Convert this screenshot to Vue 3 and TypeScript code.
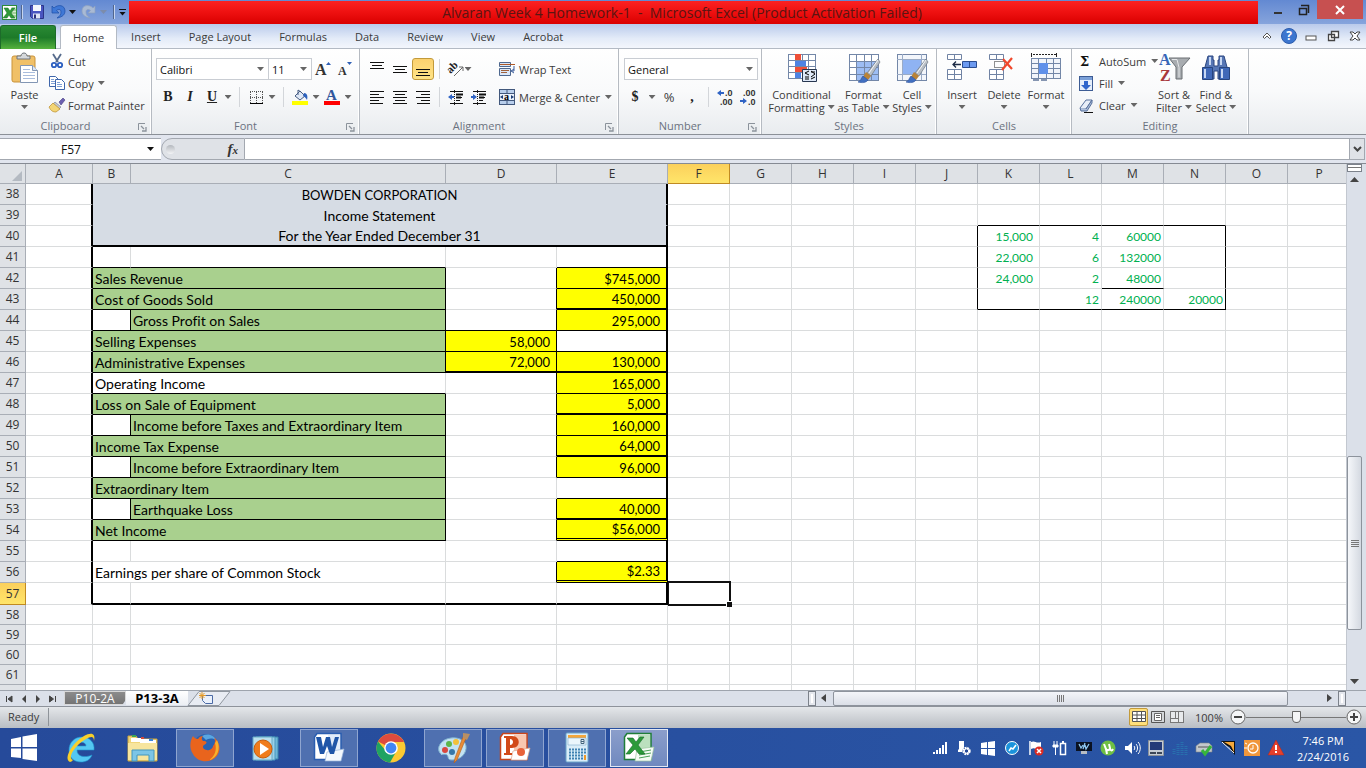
<script setup lang="ts">
import { ref } from 'vue'

interface Cell {
  key: string
  text: string
  cls: string
  span: number
}
interface Spec {
  v?: string
  c?: string
  span?: number
}

const columns = 'ABCDEFGHIJKLMNOP'.split('')
const tabs = ['Home', 'Insert', 'Page Layout', 'Formulas', 'Data', 'Review', 'View', 'Acrobat']

const specs: Record<string, Spec> = {
  B38: { v: 'BOWDEN CORPORATION', c: 'head caps', span: 4 },
  B39: { v: 'Income Statement', c: 'head', span: 4 },
  B40: { v: 'For the Year Ended December 31', c: 'head b2', span: 4 },
  B41: { c: 'bb' }, C41: { c: 'bb' }, E41: { c: 'bb' },
  B42: { v: 'Sales Revenue', c: 'green', span: 2 }, D42: { c: 'br' }, E42: { v: '$745,000', c: 'yellow bb' },
  B43: { v: 'Cost of Goods Sold', c: 'green', span: 2 }, D43: { c: 'br' }, E43: { v: '450,000', c: 'yellow b2' },
  B44: { c: 'bb br' }, C44: { v: 'Gross Profit on Sales', c: 'green' }, D44: { c: 'bb br' }, E44: { v: '295,000', c: 'yellow bb' },
  B45: { v: 'Selling Expenses', c: 'green', span: 2 }, D45: { v: '58,000', c: 'yellow bb br' }, E45: { c: 'bb' },
  B46: { v: 'Administrative Expenses', c: 'green', span: 2 }, D46: { v: '72,000', c: 'yellow b2 br' }, E46: { v: '130,000', c: 'yellow b2' },
  B47: { v: 'Operating Income', c: 'bb', span: 2 }, D47: { c: 'br' }, E47: { v: '165,000', c: 'yellow bb' },
  B48: { v: 'Loss on Sale of Equipment', c: 'green', span: 2 }, D48: { c: 'br' }, E48: { v: '5,000', c: 'yellow b2' },
  B49: { c: 'bb br' }, C49: { v: 'Income before Taxes and Extraordinary Item', c: 'green' }, D49: { c: 'br' }, E49: { v: '160,000', c: 'yellow bb' },
  B50: { v: 'Income Tax Expense', c: 'green', span: 2 }, D50: { c: 'br' }, E50: { v: '64,000', c: 'yellow b2' },
  B51: { c: 'bb br' }, C51: { v: 'Income before Extraordinary Item', c: 'green' }, D51: { c: 'br' }, E51: { v: '96,000', c: 'yellow bb' },
  B52: { v: 'Extraordinary Item', c: 'green', span: 2 }, E52: { c: 'bb' },
  B53: { c: 'bb br' }, C53: { v: 'Earthquake Loss', c: 'green' }, D53: { c: 'br' }, E53: { v: '40,000', c: 'yellow b2' },
  B54: { v: 'Net Income', c: 'green', span: 2 }, D54: { c: 'br' }, E54: { v: '$56,000', c: 'yellow bd' },
  E55: { c: 'bb' },
  B56: { v: 'Earnings per share of Common Stock', span: 2 }, D56: { c: 'br' }, E56: { v: '$2.33', c: 'yellow bd' },
  B57: { c: 'b2' }, C57: { c: 'b2' }, D57: { c: 'b2' }, E57: { c: 'b2' },
  F57: { c: 'active' },
  K39: { c: 'bb' }, L39: { c: 'bb' }, M39: { c: 'bb' }, N39: { c: 'bb' },
  J40: { c: 'br' }, J41: { c: 'br' }, J42: { c: 'br' }, J43: { c: 'br' },
  K40: { v: '15,000', c: 'calc comma' }, L40: { v: '4', c: 'calc' }, M40: { v: '60000', c: 'calc' }, N40: { c: 'br' },
  K41: { v: '22,000', c: 'calc comma' }, L41: { v: '6', c: 'calc' }, M41: { v: '132000', c: 'calc' }, N41: { c: 'br' },
  K42: { v: '24,000', c: 'calc comma' }, L42: { v: '2', c: 'calc' }, M42: { v: '48000', c: 'calc bb' }, N42: { c: 'br' },
  K43: { c: 'bb' }, L43: { v: '12', c: 'calc bb' }, M43: { v: '240000', c: 'calc bb' }, N43: { v: '20000', c: 'calc bb br' },
}

function buildRow(n: number): Cell[] {
  const out: Cell[] = []
  let skip = 0
  for (const col of columns) {
    if (skip > 0) { skip--; continue }
    const s = specs[col + n] ?? {}
    const span = s.span ?? 1
    skip = span - 1
    const cls = [s.c ?? '']
    if (n <= 57 && (col === 'A' || col === 'E' || span === 4)) cls.push('r2')
    out.push({ key: col + n, text: s.v ?? '', cls: cls.join(' '), span })
  }
  return out
}
const rows = Array.from({ length: 25 }, (_, i) => {
  const n = 38 + i
  return { n, label: n < 62 ? String(n) : '', cls: n === 57 ? 'h22' : n > 57 ? 'h20' : 'h21', cells: buildRow(n) }
})

const nameBox = ref('F57')
const formula = ref('')
const zoom = ref(50)

const grid = (x: number, y: number, w: number, h: number, nx: number, ny: number, c = '#7387a8') => {
  let d = ''
  for (let i = 0; i <= nx; i++) d += `M${x + Math.round((w * i) / nx) + 0.5} ${y}v${h}`
  for (let i = 0; i <= ny; i++) d += `M${x} ${y + Math.round((h * i) / ny) + 0.5}h${w + 1}`
  return `<path d="${d}" stroke="${c}" fill="none"/>`
}
const lines = (rowsX: [number, number, number][]) =>
  `<path d="${rowsX.map(([x, y, w]) => `M${x} ${y}.5h${w}`).join('')}" stroke="#111"/>`
const brush = `<path d="M30 6l2 3-9 14-4-3z" fill="#b9bfc6" stroke="#6d7782" stroke-width=".7"/><path d="M30 7l-9 13" stroke="#f4f6f8"/><path d="M18 19l5 4-3 4-5-3z" fill="#b98338"/><path d="M15 23l5 4c-2 3-6 3-10 2 3-1 3-4 5-6z" fill="#416fc0" stroke="#2a519c" stroke-width=".6"/>`
const page = (x: number, y: number) => `<path d="M${x}.5 ${y}.500h6l3 3v7h-9z" fill="#fff" stroke="#3f66ab"/><path d="M${x + 2} ${y + 3}.500h3m-3 2h5m-5 2h5" stroke="#7fa0d5"/>`

const icons: Record<string, string> = {
  excel: `<rect x="1.5" y="1.5" width="14" height="14" fill="#fff" stroke="#2d8a3c"/><path d="M10 3h5v12h-5z" fill="#d6efd2"/><path d="M10 6h5m-5 3h5m-5 3h5" stroke="#74b56b"/><path d="M3 4h4l2 3 2-3h3l-4 5 4 5h-4l-2-3-2 3H2l4-5z" fill="#2f9a39" stroke="#1b6c2a" stroke-width=".5"/>`,
  save: `<path d="M1.500 1.500h13v13h-11l-2-2z" fill="#4a55c0" stroke="#2c3488"/><path d="M4 1h8v6H4z" fill="#f4f7fd"/><path d="M4 9.500h7v5H4z" fill="#dfe4f4"/><path d="M5 10.500h2v4H5z" fill="#29307c"/>`,
  undo: `<path d="M2 2v7h7L6.500 6.500C9 4.500 11 5.500 11 8s-1 4-4 6c6-1 8-4 8-7 0-6-7-7-11-3z" fill="#3f78d6" stroke="#1e4fa6" stroke-width=".7"/>`,
  redo: `<path d="M14 2v7H7l2.500-2.500C7 4.500 5 5.500 5 8s1 4 4 6c-6-1-8-4-8-7 0-6 7-7 11-3z" fill="#a9bad4" stroke="#8ea1bf" stroke-width=".7"/>`,
  paste: `<rect x="3" y="3" width="23" height="26" rx="2" fill="#f0c068" stroke="#c9933a"/><path d="M8 6V3h4c0-4 6-4 6 0h3v3z" fill="#d5d8db" stroke="#6f757b"/><path d="M11.500 12.500h12l5 5v12h-17z" fill="#fff" stroke="#8296b4"/><path d="M23.500 12.500v5h5" fill="#dbe6f6" stroke="#8296b4"/><path d="M14 16.500h7m-7 3h12m-12 3h12m-12 3h12" stroke="#a9bddd"/>`,
  cut: `<path d="M4 1l5 8m3-8L7 9" stroke="#566b8c" stroke-width="1.800"/><circle cx="5" cy="12" r="2.200" fill="none" stroke="#2c5fc0" stroke-width="1.800"/><circle cx="11" cy="12" r="2.200" fill="none" stroke="#2c5fc0" stroke-width="1.800"/>`,
  copy: page(0, 1) + page(6, 4),
  painter: `<path d="M10 5l4-4 2 2-4 5z" fill="#6b5fb0" stroke="#453b80" stroke-width=".6"/><path d="M6 5l6 5-2 2-6-5z" fill="#c4c9d3" stroke="#70788a" stroke-width=".6"/><path d="M4 6l7 6-4 3c-3 0-5-1-7-5z" fill="#f3d575" stroke="#b98b2a" stroke-width=".7"/>`,
  growA: `<text x="0" y="14" font-family="Liberation Serif" font-weight="700" font-size="16" fill="#333">A</text><path d="M11 4l2.500-3L16 4z" fill="#2e5fb5"/>`,
  shrinkA: `<text x="1" y="14" font-family="Liberation Serif" font-weight="700" font-size="12" fill="#333">A</text><path d="M10 1h5l-2.500 3z" fill="#2e5fb5"/>`,
  border: `<path d="M1.500 2v11M7.500 2v11M13.500 2v11M1 1.500h13M1 7.500h13" stroke="#555" stroke-dasharray="1 1"/><path d="M1 13.500h13" stroke="#000"/>`,
  bucket: `<path d="M3 7l5-5 5 5-5 4z" fill="#dfe8f6" stroke="#475d82"/><path d="M6 6V1l3 2" fill="none" stroke="#475d82"/><path d="M12 4c3 0 4 3 3 7-1-2-2-3-4-4z" fill="#2e62bd"/><path d="M0 12h16v4H0z" fill="#ff0"/>`,
  fontA: `<text x="2" y="11" font-family="Liberation Serif" font-weight="700" font-size="15" fill="#2f569c">A</text><path d="M0 12h16v4H0z" fill="red"/>`,
  top: lines([[1, 1, 14], [3, 4, 10], [1, 7, 14]]),
  mid: lines([[1, 5, 14], [3, 8, 10], [1, 11, 14]]),
  bot: lines([[1, 8, 14], [3, 11, 10], [1, 14, 14]]),
  left: lines([[1, 2, 14], [1, 5, 9], [1, 8, 14], [1, 11, 9], [1, 14, 13]]),
  center: lines([[1, 2, 14], [3, 5, 10], [1, 8, 14], [3, 11, 10], [1, 14, 14]]),
  right: lines([[1, 2, 14], [6, 5, 9], [1, 8, 14], [6, 11, 9], [2, 14, 13]]),
  outdent: lines([[2, 2, 13], [8, 5, 7], [8, 8, 6], [8, 11, 4], [2, 14, 13]]) + `<path d="M8 5.500h7M8 8.500h5" stroke="#111" stroke-width="2"/><path d="M0 8l4-3v2h2v2H4v2z" fill="#2f63c4"/><path d="M6.500 1v15" stroke="#222" stroke-dasharray="1 1"/>`,
  indent: lines([[2, 2, 13], [8, 5, 7], [8, 8, 6], [8, 11, 4], [2, 14, 13]]) + `<path d="M8 5.500h7M8 8.500h5" stroke="#111" stroke-width="2"/><path d="M6 8L2 5v2H0v2h2v2z" fill="#2f63c4"/><path d="M6.500 1v15" stroke="#222" stroke-dasharray="1 1"/>`,
  orient: `<text transform="rotate(-45 6 8)" x="0" y="9" font-family="Liberation Serif" font-weight="700" font-size="11" fill="#222">ab</text><path d="M6 15l9-9m-4 0h4v4" stroke="#666" fill="none"/>`,
  wrap: `<path d="M.5 1.500h11v4H.5zM.5 7.500h11v7H.5z" fill="#dce8f8" stroke="#4e688f"/><path d="M1 3.500h15" stroke="#b05a28"/><path d="M2 9.500h8m-8 2h6" stroke="#a0623c"/><path d="M15 5v5h-2m2-2l-3 2 3 2" stroke="#3d5f9c" fill="none"/>`,
  merge: `<rect x=".5" y=".5" width="15" height="15" fill="#b9cfec" stroke="#42587c"/><path d="M1 4.500h14M1 11.500h14M8 1v3m0 8v3" stroke="#42587c"/><path d="M1 5h14v6H1z" fill="#eaf2fc"/><text x="5" y="11" font-family="Liberation Serif" font-weight="700" font-size="10">a</text><path d="M1 8l3-2v4zM15 8l-3-2v4z" fill="#1d3d75"/>`,
  decUp: `<path d="M0 4l4-3v2h3v2H4v2z" fill="#2f63c4"/><text x="8" y="7" font-family="Liberation Sans" font-size="9" font-weight="700" fill="#333">.0</text><text x="3" y="16" font-family="Liberation Sans" font-size="9" font-weight="700" fill="#333">.00</text>`,
  decDown: `<path d="M7 12l-4-3v2H0v2h3v2z" fill="#2f63c4"/><text x="3" y="7" font-family="Liberation Sans" font-size="9" font-weight="700" fill="#333">.00</text><text x="8" y="16" font-family="Liberation Sans" font-size="9" font-weight="700" fill="#333">.0</text>`,
  cond: `<rect x="2" y="1" width="27" height="25" fill="#fff"/>${grid(2, 1, 27, 24, 4, 4)}<path d="M9 1h6v6H9z" fill="#ee4f38"/><path d="M9 8h11v5H9z" fill="#4f83e3"/><path d="M9 14h12v5H9z" fill="#ee4f38"/><path d="M9 20h6v5H9z" fill="#4f83e3"/><path d="M16.500 16.500h14v12h-14z" fill="#dfe9f8" stroke="#273650"/><path d="M23 18l-4 2 4 2m-4 2h4m-4 2h4M25 18l4 3-4 3m4-5h-4m0 7l4-2" stroke="#000" fill="none"/>`,
  fmtTable: `<rect x="1" y="1" width="29" height="26" fill="#fff"/><path d="M9 8h21v19H9z" fill="#9dbdf4"/>${grid(1, 1, 29, 26, 4, 4)}${brush}`,
  cellStyle: `<rect x="1" y="1" width="29" height="26" fill="#f3f6fb"/>${grid(1, 1, 29, 26, 1, 1)}<path d="M6.500 1v26M1 6.500h29M1 21.500h29M25.500 1v26" stroke="#9aabc6"/><path d="M7 7h18v14H7z" fill="#8fb3f3"/>${brush}`,
  insert: `<path d="M1.500 1.500h14v5h-14zM8.500 1v6M1.500 16.500h14v10h-14zM8.500 16v10M1 21.500h15" fill="#fff" stroke="#7083a4"/><path d="M16.500 8.500h14v6h-14z" fill="#6d9af0" stroke="#2b4d91"/><path d="M23.500 8v6" stroke="#2b4d91"/><path d="M15 11.500H7m3-3l-3 3 3 3" stroke="#1d2b45" fill="none" stroke-width="1.300"/>`,
  del: `<path d="M1.500 1.500h14v5h-14zM8.500 1v6M1.500 16.500h14v10h-14zM8.500 16v10M1 21.500h15" fill="#fff" stroke="#7083a4"/><path d="M6.500 8.500h10v6h-10z" fill="none" stroke="#222" stroke-dasharray="1 1"/><path d="M15 6l9 10M24 5L14 17" stroke="#f0482c" stroke-width="2.200"/>`,
  format: `<path d="M1.500 0v4M26.500 0v4" stroke="#222"/><path d="M3 1.500h24" stroke="#222" stroke-dasharray="2 1"/><rect x="1" y="5" width="29" height="21" fill="#f2f5fb"/>${grid(1, 5, 29, 20, 4, 4)}<path d="M9 10h9v11H9z" fill="#5f90ea"/><path d="M3 27h6m2 0h6" stroke="#8595b1" stroke-width="2"/>`,
  sum: `<text x="2" y="13" font-family="DejaVu Serif" font-weight="700" font-size="13" fill="#111">Σ</text>`,
  fill: `<rect x="1.500" y="1.500" width="13" height="14" fill="#e6effb" stroke="#3d5c94"/><path d="M2 2h12v3H2z" fill="#7ba0d8"/><path d="M6 6h4v4h3l-5 5-5-5h3z" fill="#2f66cc"/>`,
  clear: `<path d="M2 11l6-8h6l-6 9H3z" fill="#e8eef8" stroke="#57709c"/><path d="M8 12l6-9v3l-5 8H3l-1-3" fill="#aebfdc" stroke="#57709c"/><path d="M6 15.500h9" stroke="#111"/>`,
  sort: `<path d="M11 5h21l-8 9v12h-6V14z" fill="#a8acb0" stroke="#6a6e73"/><path d="M14 6.500h5l2 8v10" fill="none" stroke="#e5e7e9"/><text x="1" y="12" font-family="Liberation Serif" font-weight="700" font-size="16" fill="#3766b8">A</text><text x="2" y="28" font-family="Liberation Serif" font-weight="700" font-size="16" fill="#a8383c">Z</text>`,
  find: `<path d="M8 3h5v4h1v6h4V7h1V3h5l3 11v12h-9v-8h-4v8H5V14z" fill="#5676b5" stroke="#2c4780"/><path d="M2.500 14.500h10v12h-10zM19.500 14.500h10v12h-10z" fill="#3f68b8" stroke="#27457f"/><path d="M5 16v9M22 16v9M10 4v8M21 4v8" stroke="#c8d8f3" stroke-width="2"/>`,
  launcher: `<path d="M.5 7V.5H7" stroke="#8b929b" fill="none"/><path d="M3 3l3 3M8 4v4H4" stroke="#8b929b" fill="none" stroke-width="1.300"/>`,
}

const office = (c: string, dark: string, body: string, letter: string) =>
  `<path d="M4 1.500h24v26H1.500V5z" fill="#fff" stroke="${dark}" stroke-width="1.500"/><path d="M15 3h12v24H15z" fill="${c}" opacity=".6"/>${body}${letter}`
const taskIcons: Record<string, string> = {
  ie: `<path d="M29 18H12c0 7 8 8 15 5-2 5-6 7-11 7C8 30 4 25 4 18S9 5 17 5s13 6 12 13zM12 14h9c0-5-9-5-9 0z" fill="#54c8f2" stroke="#1f95cf" stroke-width=".6"/><path d="M5 30C-2 27 7 11 19 4c7-4 12-3 10 5 0-5-3-5-8-2C10 13 2 26 8 28c-1 1-2 2-3 2z" fill="#f8cf2a"/>`,
  explorer: `<path d="M1 4h8l2 3h19v22H1z" fill="#f0d57a" stroke="#c9a53f"/><path d="M4 6h10v4H4zM13 7h10v4H13zM19 8h10v4H19z" fill="#fff"/><path d="M5 3h4v2H5z" fill="#3aa655"/><path d="M14 5h3v2h-3z" fill="#d54b3c"/><path d="M22 7h4v2h-4z" fill="#3d86d8"/><path d="M1 11h29v17H1z" fill="#f7e59e"/><path d="M5 29V18h22v11h-5v-6H10v6z" fill="#7cc5e6" stroke="#4296bd"/>`,
  firefox: `<circle cx="17" cy="15" r="13" fill="#2a62b0"/><path d="M13 4c6-3 12-1 15 5-5-4-9-2-11-1z" fill="#58a6e2"/><path d="M4 4c1 2 3 3 5 3 1-2 3-3 5-3-2 2-1 4 0 5 4 0 5 2 1 4-2 1-1 5 3 5 3 1 6-2 6-4 3-3 2-7 1-9 7 6 7 15 2 20-7 7-19 5-23-3C0 16 1 9 4 4z" fill="#e9641d"/><path d="M28 8c4 8 1 18-8 20 6-4 8-10 6-17z" fill="#f6b22c"/>`,
  wmp: `<path d="M8 5h19v22H8z" fill="#6fb7d8" stroke="#3c87ad"/><path d="M5 5h19v23H5z" fill="#9bd0e8" stroke="#4a98bd"/><path d="M2 5h19v23H2z" fill="#b9dfee" stroke="#66a9c6"/><circle cx="12" cy="17" r="9" fill="#f07c1c" stroke="#c85d0b"/><path d="M9 11l9 6-9 6z" fill="#fff"/>`,
  word: office('#cfe0f6', '#2a5db0', '<path d="M16 20h11m-10 3h10m-9 3h9" stroke="#5b87c9"/><path d="M14 20l17-3-3 12H12z" fill="#f4f8fd" stroke="#9ab4da" stroke-width=".7"/>', '<path d="M3 5h5l2 10 3-10h4l2 10 3-10h4l-5 17h-4l-3-8-3 8H7z" fill="#1f55a8"/>'),
  chrome: `<circle cx="16" cy="16" r="14.500" fill="#fbc932"/><path d="M16 16L3 9.500A14.500 14.500 0 0 1 29 10H16z" fill="#dd4b3e"/><path d="M3 9.500A14.500 14.500 0 0 0 15 30.500L21.500 19 11 19z" fill="#1fa362"/><circle cx="16" cy="16" r="6.800" fill="#fff"/><circle cx="16" cy="16" r="5.400" fill="#4286f5"/>`,
  paint: `<path d="M14 6C4 7-1 16 3 21c2 3 5 0 7 2s0 5 5 5c9 0 15-7 14-14-1-6-8-9-15-8z" fill="#c3e2f3" stroke="#7fb2cf"/><circle cx="8" cy="18" r="3" fill="#d9473e"/><circle cx="12" cy="12" r="3" fill="#5cb64a"/><circle cx="19" cy="10" r="3" fill="#f3c13a"/><circle cx="15" cy="20" r="3" fill="#3676a8"/><path d="M29 6l-9 22-3 3 1-5 8-21z" fill="#e98b36" stroke="#b1601b" stroke-width=".6"/><path d="M26 1l7 1-3 6-4-2z" fill="#b98f63"/>`,
  ppt: office('#f4a27c', '#c8441b', '<path d="M14 19l17-3-3 12H12z" fill="#fff" stroke="#dba58d" stroke-width=".7"/><circle cx="22" cy="20" r="4" fill="#e8623a"/>', '<path d="M5 4h8c9 0 9 12 0 12h-2v5h2v2H5v-2h2V6H5zm6 3v6c4 0 4-6 0-6z" fill="#d24a18"/>'),
  calcr: `<rect x="5" y="1" width="22" height="29" rx="1" fill="#d9edf8" stroke="#6ba4ca"/><path d="M7 3h18v3H7z" fill="#f3a63b"/><path d="M7 6h18v7H7z" fill="#eaf6fc" stroke="#7fb0cd" stroke-width=".6"/><path d="M20 7.500h3v4h-3zm0 2h3" stroke="#42647c" fill="none"/><path d="M8 17.500h17M8 20.500h17M8 23.500h14M8 26.500h14" stroke="#3f82b2" stroke-width="2" stroke-dasharray="2 1"/><path d="M23 23h2v5h-2z" fill="#ee9a2a"/>`,
  xl: office('#8ecb93', '#1f7d38', '<path d="M14 17l17-2-3 14H12z" fill="#f6fcf6" stroke="#9cc7a0" stroke-width=".7"/><path d="M16 20l12-2m-12 5l12-2m-12 5l11-2" stroke="#4da25a"/>', '<path d="M4 6h6l3 4 4-5h4l-6 8 7 9h-6l-4-5-5 5H3l7-9z" fill="#2c9a3a" stroke="#14692a" stroke-width=".6"/>'),
}
const tasks = [
  { id: 'ie', name: 'Internet Explorer', cls: '' },
  { id: 'explorer', name: 'File Explorer', cls: '' },
  { id: 'firefox', name: 'Firefox', cls: 'open' },
  { id: 'wmp', name: 'Media Player', cls: '' },
  { id: 'word', name: 'Word', cls: 'open' },
  { id: 'chrome', name: 'Chrome', cls: '' },
  { id: 'paint', name: 'Paint', cls: 'open' },
  { id: 'ppt', name: 'PowerPoint', cls: 'open' },
  { id: 'calcr', name: 'Calculator', cls: 'open' },
  { id: 'xl', name: 'Excel', cls: 'open current' },
]
const tray: string[] = [
  `<path d="M1 12h2v2H1zM4 10h2v4H4zM7 8h2v6H7zM10 5h2v9h-2zM13 2h2v12h-2z" fill="#fff"/>`,
  `<path d="M3 1h5v8l-2 3H2v-2l1-1z" fill="#fff"/><circle cx="10.500" cy="11" r="4" fill="#264a9a"/><circle cx="10.500" cy="11" r="3" fill="none" stroke="#fff" stroke-width="2.400" stroke-dasharray="1.800 .6"/><circle cx="10.500" cy="11" r="2.300" fill="none" stroke="#fff"/>`,
  `<path d="M1 3l6-1v6H1zM8 2l7-1v7H8zM1 9h6v6l-6-1zM8 9h7v7l-7-1z" fill="#fff"/>`,
  `<circle cx="8" cy="8" r="6.500" fill="#1b93dc" stroke="#fff"/><path d="M5 11l2-3 2 1 3-4" stroke="#fff" stroke-width="1.600" fill="none"/>`,
  `<path d="M2 1v14" stroke="#fff" stroke-width="1.500"/><path d="M3 2c4-2 5 2 10 0v7c-5 1-6-2-10 0z" fill="#fff"/><circle cx="11" cy="11" r="4.500" fill="#dd2b22"/><path d="M9 9l4 4m0-4l-4 4" stroke="#fff" stroke-width="1.500"/>`,
  `<path d="M1 5h5v2H1z" fill="#fff" stroke="#fff"/><path d="M2 1v4M5 1v4M3.500 7v8" stroke="#fff"/><path d="M8.500 3.500h5v11h-5z" fill="none" stroke="#fff" stroke-width="1.500"/><path d="M10 1h2v2h-2z" fill="#fff"/>`,
  `<path d="M0 2h16v9H0z" fill="#0a1222"/><path d="M3 4l2 4 2-3m2 0l1 4 3-5M7 9l2-6" stroke="#8ec6f0" fill="none" stroke-width="1.300"/><path d="M5 11h6v3H5z" fill="#b7bdc4"/>`,
  `<circle cx="8" cy="8" r="7.500" fill="#6fbf44"/><path d="M4 4l2 5c1 2 4 1 4-1l-1-4m1 4c0 3 2 3 3 1M6 9l1 5" stroke="#fff" stroke-width="2" fill="none"/>`,
  `<path d="M1 6h3l4-4v12l-4-4H1z" fill="#fff"/><path d="M10 6c1 1 1 3 0 4m2-6c2 2 2 6 0 8m2-10c3 3 3 9 0 12" stroke="#fff" fill="none"/>`,
  `<path d="M.5.500h15v15H.5z" fill="#c5ccd4" stroke="#8c939b"/><path d="M2 2h12v8H2z" fill="#243a78"/><path d="M2 12h6v2H2zm7 0h5v2H9z" fill="#3b4657"/>`,
  `<path d="M2 9v6M6 4v11M10 2v13M14 6v9" stroke="#2870ae" stroke-width="3" stroke-dasharray="1 1"/>`,
  `<path d="M0 6l4-3h9l3 3v6H0z" fill="#c3c8cc" stroke="#7d8388" stroke-width=".6"/><path d="M2 7h12" stroke="#555"/><path d="M6 10l3 4 6-8" stroke="#37b53c" stroke-width="3" fill="none"/>`,
  `<path d="M1 1h14v14l-4-4-1-4-5-2z" fill="#111"/><path d="M4 2h10v10L11 6z" fill="#f5a83c"/><path d="M2 2l12 11" stroke="#fff"/>`,
  `<path d="M0 0h16v16H0z" fill="#f0973c"/><circle cx="9" cy="8" r="5" fill="none" stroke="#fff" stroke-width="1.300"/><path d="M9 5v4H6M0 8h3M3 4L1 3" stroke="#fff" fill="none"/>`,
  `<path d="M8 0l8 15H0z" fill="#e5402c" stroke="#b82616" stroke-width=".5"/><path d="M8 5v5" stroke="#fff" stroke-width="2"/><path d="M7 11h2v2H7z" fill="#fff"/>`,
]
</script>

<template>
  <div class="app">
    <header class="titlebar">
      <div class="quick">
        <svg class="i17" viewBox="0 0 17 17" v-html="icons.excel"></svg>
        <span class="qsep"></span>
        <button class="ib" aria-label="Save"><svg class="i16" viewBox="0 0 16 16" v-html="icons.save"></svg></button>
        <button class="ib" aria-label="Undo"><svg class="i16" viewBox="0 0 16 16" v-html="icons.undo"></svg><i class="arr dark"></i></button>
        <button class="ib" aria-label="Redo"><svg class="i16" viewBox="0 0 16 16" v-html="icons.redo"></svg><i class="arr"></i></button>
        <span class="qsep"></span>
        <button class="ib more" aria-label="Customize toolbar"><i class="arr dark"></i></button>
      </div>
      <h1 class="caption">Alvaran Week 4 Homework-1&nbsp; -&nbsp; Microsoft Excel (Product Activation Failed)</h1>
      <div class="winbtns">
        <button aria-label="Minimize"><svg width="10" height="10"><path d="M1 8h8" stroke="#333" stroke-width="2" /></svg></button>
        <button aria-label="Restore"><svg width="12" height="12"><path d="M1.500 4.500h7v6h-7zM3 1.500h7.500V9" fill="none" stroke="#222" stroke-width="1.500" /></svg></button>
        <button class="close" aria-label="Close"><svg width="10" height="10"><path d="M1 1l8 8M9 1L1 9" stroke="#fff" stroke-width="2" /></svg></button>
      </div>
    </header>

    <nav class="tabs">
      <button class="file">File</button>
      <button v-for="(t, i) in tabs" :key="t" :class="['tab', { on: i === 0 }]">{{ t }}</button>
      <div class="tabtools">
        <button aria-label="Collapse ribbon"><svg width="12" height="10"><path d="M2 6l4-4 4 4-1.500 1.500L6 5 3.500 7.500z" fill="#fff" stroke="#555" /></svg></button>
        <button aria-label="Help"><svg width="16" height="16"><circle cx="8" cy="8" r="7.500" fill="#3c76cf" stroke="#2c5cac" /><text x="8" y="12" text-anchor="middle" font-family="Open Sans" font-size="12" font-weight="700" fill="#fff">?</text></svg></button>
        <button aria-label="Minimize workbook"><svg width="12" height="10"><rect x="1" y="5" width="10" height="4" fill="#fff" stroke="#555" /></svg></button>
        <button aria-label="Restore workbook"><svg width="13" height="12"><path d="M4.500 1.500h7v6h-7zM1.500 4.500h6v6h-6z" fill="#fff" stroke="#444" stroke-width="1.300" /></svg></button>
        <button aria-label="Close workbook"><svg width="12" height="10"><path d="M1 1h3l2 2 2-2h3L8 5l3 4H8L6 7 4 9H1l3-4z" fill="#fff" stroke="#444" /></svg></button>
      </div>
    </nav>

    <section class="ribbon">
      <div class="group clip">
        <div class="body">
          <button class="bigb paste"><svg class="i32" viewBox="0 0 32 32" v-html="icons.paste"></svg><span>Paste</span><i class="arr"></i></button>
          <div class="col">
            <button class="sm"><svg class="i16" viewBox="0 0 16 16" v-html="icons.cut"></svg>Cut</button>
            <button class="sm"><svg class="i16" viewBox="0 0 16 16" v-html="icons.copy"></svg>Copy<i class="arr"></i></button>
            <button class="sm"><svg class="i16" viewBox="0 0 16 16" v-html="icons.painter"></svg>Format Painter</button>
          </div>
        </div>
        <footer>Clipboard<svg class="launch" viewBox="0 0 8 8" v-html="icons.launcher"></svg></footer>
      </div>

      <div class="group font">
        <div class="body two">
          <div class="row combos">
            <select class="fname" aria-label="Font"><option>Calibri</option></select>
            <select class="fsize" aria-label="Font size"><option>11</option></select>
            <button class="sl" aria-label="Grow font"><svg class="i16" viewBox="0 0 16 16" v-html="icons.growA"></svg></button>
            <button class="sl" aria-label="Shrink font"><svg class="i16" viewBox="0 0 16 16" v-html="icons.shrinkA"></svg></button>
          </div>
          <div class="row">
            <button class="sl serif"><b>B</b></button><button class="sl serif"><b><i>I</i></b></button><button class="sl serif"><b><u>U</u></b></button>
            <button class="ar" aria-label="Underline options"><i class="arr"></i></button><span class="sep"></span>
            <button class="sl" aria-label="Borders"><svg class="i15" viewBox="0 0 15 15" v-html="icons.border"></svg></button>
            <button class="ar" aria-label="Border options"><i class="arr"></i></button><span class="sep"></span>
            <button class="sl" aria-label="Fill colour"><svg class="i16" viewBox="0 0 16 16" v-html="icons.bucket"></svg></button>
            <button class="ar" aria-label="Fill options"><i class="arr"></i></button>
            <button class="sl" aria-label="Font colour"><svg class="i16" viewBox="0 0 16 16" v-html="icons.fontA"></svg></button>
            <button class="ar" aria-label="Font colour options"><i class="arr"></i></button>
          </div>
        </div>
        <footer>Font<svg class="launch" viewBox="0 0 8 8" v-html="icons.launcher"></svg></footer>
      </div>

      <div class="group align">
        <div class="body">
          <div class="two">
            <div class="row">
              <button class="sl" aria-label="Top align"><svg class="i16" viewBox="0 0 16 16" v-html="icons.top"></svg></button>
              <button class="sl" aria-label="Middle align"><svg class="i16" viewBox="0 0 16 16" v-html="icons.mid"></svg></button>
              <button class="sl pressed" aria-label="Bottom align"><svg class="i16" viewBox="0 0 16 16" v-html="icons.bot"></svg></button>
              <span class="sep"></span>
              <button class="sl" aria-label="Orientation"><svg class="i16" viewBox="0 0 16 16" v-html="icons.orient"></svg></button>
              <button class="ar" aria-label="Orientation options"><i class="arr"></i></button>
            </div>
            <div class="row">
              <button class="sl" aria-label="Align left"><svg class="i16" viewBox="0 0 16 16" v-html="icons.left"></svg></button>
              <button class="sl" aria-label="Center"><svg class="i16" viewBox="0 0 16 16" v-html="icons.center"></svg></button>
              <button class="sl" aria-label="Align right"><svg class="i16" viewBox="0 0 16 16" v-html="icons.right"></svg></button>
              <span class="sep"></span>
              <button class="sl" aria-label="Decrease indent"><svg class="i16" viewBox="0 0 16 16" v-html="icons.outdent"></svg></button>
              <button class="sl" aria-label="Increase indent"><svg class="i16" viewBox="0 0 16 16" v-html="icons.indent"></svg></button>
            </div>
          </div>
          <div class="two wraps">
            <button class="sm"><svg class="i16" viewBox="0 0 16 16" v-html="icons.wrap"></svg>Wrap Text</button>
            <button class="sm"><svg class="i16" viewBox="0 0 16 16" v-html="icons.merge"></svg>Merge &amp; Center<i class="arr"></i></button>
          </div>
        </div>
        <footer>Alignment<svg class="launch" viewBox="0 0 8 8" v-html="icons.launcher"></svg></footer>
      </div>

      <div class="group number">
        <div class="body two">
          <div class="row"><select class="fmt" aria-label="Number format"><option>General</option></select></div>
          <div class="row">
            <button class="sl serif"><b>$</b></button><button class="ar" aria-label="Currency options"><i class="arr"></i></button>
            <button class="sl pct">%</button><button class="sl serif"><b>,</b></button><span class="sep"></span>
            <button class="sl" aria-label="Increase decimal"><svg class="i16" viewBox="0 0 16 16" v-html="icons.decUp"></svg></button>
            <button class="sl" aria-label="Decrease decimal"><svg class="i16" viewBox="0 0 16 16" v-html="icons.decDown"></svg></button>
          </div>
        </div>
        <footer>Number<svg class="launch" viewBox="0 0 8 8" v-html="icons.launcher"></svg></footer>
      </div>

      <div class="group styles">
        <div class="body">
          <button class="bigb w72"><svg class="i32" viewBox="0 0 32 32" v-html="icons.cond"></svg><span>Conditional<br />Formatting<i class="arr"></i></span></button>
          <button class="bigb w52"><svg class="i32" viewBox="0 0 32 32" v-html="icons.fmtTable"></svg><span>Format<br />as Table<i class="arr"></i></span></button>
          <button class="bigb w44"><svg class="i32" viewBox="0 0 32 32" v-html="icons.cellStyle"></svg><span>Cell<br />Styles<i class="arr"></i></span></button>
        </div>
        <footer>Styles</footer>
      </div>

      <div class="group cells">
        <div class="body">
          <button class="bigb w42"><svg class="i32" viewBox="0 0 32 32" v-html="icons.insert"></svg><span>Insert</span><i class="arr"></i></button>
          <button class="bigb w42"><svg class="i32" viewBox="0 0 32 32" v-html="icons.del"></svg><span>Delete</span><i class="arr"></i></button>
          <button class="bigb w42"><svg class="i32" viewBox="0 0 32 32" v-html="icons.format"></svg><span>Format</span><i class="arr"></i></button>
        </div>
        <footer>Cells</footer>
      </div>

      <div class="group editing">
        <div class="body">
          <div class="col">
            <button class="sm"><svg class="i16" viewBox="0 0 16 16" v-html="icons.sum"></svg>AutoSum<i class="arr"></i></button>
            <button class="sm"><svg class="i16" viewBox="0 0 16 16" v-html="icons.fill"></svg>Fill<i class="arr"></i></button>
            <button class="sm"><svg class="i16" viewBox="0 0 16 16" v-html="icons.clear"></svg>Clear<i class="arr"></i></button>
          </div>
          <button class="bigb w42"><svg class="i32" viewBox="0 0 32 32" v-html="icons.sort"></svg><span>Sort &amp;<br />Filter<i class="arr"></i></span></button>
          <button class="bigb w42"><svg class="i32" viewBox="0 0 32 32" v-html="icons.find"></svg><span>Find &amp;<br />Select<i class="arr"></i></span></button>
        </div>
        <footer>Editing</footer>
      </div>
    </section>

    <div class="formulabar">
      <input v-model="nameBox" class="namebox" aria-label="Name box" />
      <button class="drop" aria-label="Names"><i class="arr dark"></i></button>
      <div class="fxwrap"><span class="knob"></span><button class="fx" aria-label="Insert function"><i>f<small>x</small></i></button></div>
      <input v-model="formula" class="finput" aria-label="Formula" />
      <button class="expand" aria-label="Expand formula bar"><svg width="9" height="8"><path d="M1 2l3.500 3.500L8 2" fill="none" stroke="#444" stroke-width="2" /></svg></button>
    </div>

    <main class="work">
      <div class="sheet">
        <table>
          <colgroup>
            <col class="c-row" /><col class="c-a" /><col class="c-b" /><col class="c-c" /><col class="c-d" /><col class="c-d" />
            <col v-for="n in 10" :key="n" class="c-n" /><col />
          </colgroup>
          <thead>
            <tr>
              <th class="corner"><svg width="12" height="12"><path d="M11 1v10H1z" fill="#b4bac2" /></svg></th>
              <th v-for="c in columns" :key="c" :class="{ sel: c === 'F', last: c === 'P' }">{{ c }}</th>
            </tr>
          </thead>
          <tbody>
            <tr v-for="r in rows" :key="r.n" :class="r.cls">
              <th :class="{ sel: r.n === 57 }">{{ r.label }}</th>
              <td v-for="c in r.cells" :key="c.key" :class="c.cls" :colspan="c.span">{{ c.text }}<span v-if="c.key === 'F57'" class="cursor"></span></td>
            </tr>
          </tbody>
        </table>
      </div>
      <div class="vbar">
        <span class="vsplit"></span>
        <button class="vup" aria-label="Scroll up"></button>
        <div class="vtrack"><div class="vthumb"><span></span></div></div>
        <button class="vdown" aria-label="Scroll down"></button>
      </div>
    </main>

    <div class="sheetbar">
      <div class="nav">
        <button aria-label="First sheet"><svg width="9" height="8"><path d="M1.500 1v6M7 1v6L3 4z" stroke="#444" stroke-width="1" fill="#444" /></svg></button>
        <button aria-label="Previous sheet"><svg width="6" height="8"><path d="M5 0v8L1 4z" fill="#444" /></svg></button>
        <button aria-label="Next sheet"><svg width="6" height="8"><path d="M1 0v8l4-4z" fill="#444" /></svg></button>
        <button aria-label="Last sheet"><svg width="9" height="8"><path d="M7.500 1v6M1.500 1v6l4-3z" stroke="#444" stroke-width="1" fill="#444" /></svg></button>
      </div>
      <button class="stab other">P10-2A</button>
      <button class="stab cur">P13-3A</button>
      <button class="newtab" aria-label="Insert worksheet"><svg width="44" height="16"><path d="M0 14.500L11 .5h31L31 14.500z" fill="#e8ecf3" stroke="#8f969f" /><path d="M14.500 4.500h10v8h-7l-3-3z" fill="#eaf1fc" stroke="#4b6aa5" /><path d="M14 1v7M11 4.500h7M11.500 2l5 5m0-5l-5 5" stroke="#e59b28" /></svg></button>
      <div class="fillr"></div>
      <span class="hsplit"></span>
      <button class="hl" aria-label="Scroll left"></button>
      <div class="htrack"><div class="hthumb"><span></span></div></div>
      <button class="hr" aria-label="Scroll right"></button>
      <span class="hsplit end"></span>
    </div>

    <div class="status">
      <span class="ready">Ready</span>
      <div class="fillr"></div>
      <button class="view on" aria-label="Normal view"><svg width="14" height="12"><path d="M.5.500h13v10H.5zM.5 4h13M.5 7.500h13M5 0v11M9.500 0v11" fill="#fff" stroke="#555" /></svg></button>
      <button class="view" aria-label="Page layout view"><svg width="14" height="12"><path d="M.5.500h13v11H.5z" fill="#d5d8db" stroke="#555" /><path d="M3.500 2.500h7v7h-7zM5 4.500h4M5 6.500h4" fill="#fff" stroke="#666" /></svg></button>
      <button class="view" aria-label="Page break view"><svg width="14" height="12"><path d="M0 0h14v12H0z" fill="#777" /><path d="M1 1h4v6H1zM6 1h2v6H6zM9 1h4v10H9zM1 8h7v3H1z" fill="#e8eaec" /></svg></button>
      <span class="pct2">100%</span>
      <button class="round" aria-label="Zoom out"><svg width="16" height="16"><circle cx="8" cy="8" r="7" fill="#f5f6f7" stroke="#666" /><path d="M4 8h8" stroke="#444" stroke-width="2" /></svg></button>
      <input v-model="zoom" class="zoom" type="range" min="0" max="100" aria-label="Zoom" />
      <button class="round" aria-label="Zoom in"><svg width="16" height="16"><circle cx="8" cy="8" r="7" fill="#f5f6f7" stroke="#666" /><path d="M4 8h8M8 4v8" stroke="#444" stroke-width="2" /></svg></button>
    </div>

    <footer class="taskbar">
      <button class="start" aria-label="Start"><svg width="28" height="28"><path d="M1 5l10-2v10H1zM12.500 2.500L27 0v13H12.500zM1 14.500h10V24L1 23zM12.500 14.500H27V27l-14.500-2z" fill="#fff" /></svg></button>
      <button v-for="t in tasks" :key="t.id" :class="['task', t.cls]" :aria-label="t.name"><svg class="i32" viewBox="0 0 32 32" v-html="taskIcons[t.id]"></svg></button>
      <div class="fillr"></div>
      <div class="tray"><svg v-for="(t, i) in tray" :key="i" class="i16" viewBox="0 0 16 16" v-html="t"></svg></div>
      <div class="clock"><div>7:46 PM</div><div>2/24/2016</div></div>
    </footer>
  </div>
</template>

<style>
body { margin: 0; overflow: hidden; }
</style>

<style scoped>
.app { height: 100vh; display: flex; flex-direction: column; font-family: "Open Sans", "Noto Sans", sans-serif; font-size: 11px; color: #3b3b3b; background: #dfe3ea; overflow: hidden; }
.app *, .app *::before, .app *::after { box-sizing: border-box; }
button, input, select { font: inherit; color: inherit; border: 0; background: none; padding: 0; margin: 0; border-radius: 0; outline: 0; }
button { display: flex; align-items: center; justify-content: center; white-space: nowrap; }
svg { display: block; flex: none; overflow: visible; }
.i15 { width: 15px; height: 15px; } .i16 { width: 16px; height: 16px; } .i17 { width: 17px; height: 17px; } .i32 { width: 32px; height: 32px; }
.arr { display: inline-block; width: 7px; height: 4px; background: #666; clip-path: polygon(0 0, 100% 0, 50% 100%); flex: none; }
.arr.dark { background: #111; }
.fillr { flex: 1; }

.titlebar { flex: none; height: 24px; display: flex; background: linear-gradient(#6389d2, #86a4dc); }
.quick { width: 129px; display: flex; align-items: center; padding-left: 1px; }
.qsep { width: 2px; height: 14px; margin: 0 4px 0 3px; border-left: 1px solid #51668e; border-right: 1px solid #c5d4ef; flex: none; }
.quick .ib { gap: 3px; margin: 0 3px 0 2px; }
.quick .more { margin: 0; border-top: 1px solid #111; padding-top: 2px; }
.quick .arr { background: #7c8cab; }
.quick .arr.dark { background: #111; }
.caption { flex: 1; margin: 1px 0 0; font-size: 14px; font-weight: 400; line-height: 23px; text-align: center; color: #5a1512; background: linear-gradient(#fb2222, #ee1010 50%, #d90000); padding-right: 23px; white-space: nowrap; }
.winbtns { width: 108px; display: flex; align-items: flex-start; padding: 0 3px 0 7px; }
.winbtns button { width: 26px; height: 19px; }
.winbtns .close { width: 46px; background: #c75050; }

.tabs { flex: none; height: 25px; display: flex; position: relative; z-index: 1; margin-bottom: -1px; background: linear-gradient(#b9caeb, #e3ebf8 60%, #f3f6fc); border-bottom: 1px solid #b3bac4; }
.file { width: 56px; margin: 1px 4px -1px 0; font-weight: 600; color: #fff; border: 1px solid #1d6b2a; border-bottom: 0; border-radius: 3px 3px 0 0; background: linear-gradient(#2a8a34, #1d7a29 50%, #55b23e); }
.tab { padding: 0 14px; }
.tab.on { margin: 1px 0 -1px 0; background: #fff; border: 1px solid #b3bac4; border-bottom: 0; border-radius: 3px 3px 0 0; padding: 0 12px 1px; }
.tabtools { margin-left: auto; display: flex; }
.tabtools button { width: 22px; }

.ribbon { flex: none; height: 87px; display: flex; background: linear-gradient(#fff, #f9fafb 50%, #e9ecef); border-bottom: 1px solid #8b9097; padding-top: 1px; }
.group { display: flex; flex-direction: column; border-right: 1px solid #b6bbc2; box-shadow: inset -1px 0 #fff; }
.group footer { height: 17px; line-height: 18px; text-align: center; color: #6b7280; position: relative; padding-right: 20px; }
.styles footer, .cells footer, .editing footer { padding-right: 0; }
.launch { position: absolute; right: 5px; top: 6px; width: 8px; height: 8px; }
.body { flex: 1; display: flex; padding-top: 1px; }
.clip { width: 152px; } .font { width: 208px; } .align { width: 259px; } .number { width: 143px; } .styles { width: 175px; } .cells { width: 135px; } .editing { width: 177px; }
.two { display: flex; flex-direction: column; padding-top: 6px; }
.align .body .two { padding-top: 5px; }
.row { display: flex; height: 28px; align-items: center; }
.font .row { padding-left: 5px; } .font .combos { padding-left: 4px; }
.number .row { padding-left: 5px; }
.align .row { padding-left: 6px; gap: 1px; }
.sl { width: 22px; height: 22px; flex: none; }
.ar { width: 10px; height: 22px; flex: none; }
.sep { width: 1px; height: 20px; margin: 0 5px 0 6px; background: #d3d6da; flex: none; }
.align .sep { margin: 0 4px; } .number .sep { margin: 0 4px; }
.align .row .ar { margin-left: -5px; }
.serif { font-family: "Liberation Serif", serif; font-size: 14px; color: #222; }
.pct { font-size: 13px; }
.number .row { gap: 1px; }
.pressed { border: 1px solid #c29a3b; border-radius: 3px; background: linear-gradient(#fbd16f, #ffe487); }
select { appearance: none; height: 22px; border: 1px solid #c9cdd3; color: #111; padding: 0 3px; background: #fff url("data:image/svg+xml,%3Csvg xmlns='http://www.w3.org/2000/svg' width='7' height='4'%3E%3Cpath d='M0 0h7L3.500 4z' fill='%23666'/%3E%3C/svg%3E") no-repeat right 4px center; }
.fname { width: 113px; } .fsize { width: 43px; border-left: 0; } .fmt { width: 134px; }
.col { display: flex; flex-direction: column; }
.sm { height: 22px; justify-content: flex-start; gap: 3px; }
.sm .arr { margin-left: 1px; }
.clip .paste { width: 49px; }
.wraps { margin-left: 9px; }
.wraps .sm { height: 28px; gap: 4px; }
.editing .col { width: 81px; padding-left: 6px; }
.editing .sm { gap: 5px; }
.editing .sm .arr { margin-left: 0; }
.bigb { flex-direction: column; justify-content: flex-start; padding-top: 3px; line-height: 13px; text-align: center; }
.bigb svg { margin-bottom: 3px; }
.bigb span .arr { margin: 0 0 3px 3px; }
.bigb > .arr { margin-top: 4px; }
.styles .body { padding-left: 4px; } .cells .body { padding-left: 4px; }
.w72 { width: 71px; } .w52 { width: 53px; } .w44 { width: 44px; } .w42 { width: 42px; }

.formulabar { flex: none; height: 29px; display: flex; padding: 3px 1px 3px 0; border-bottom: 1px solid #858a93; background: #e1e5ee; }
.formulabar > * { border-top: 1px solid #a3a8b0; border-bottom: 1px solid #a3a8b0; height: 22px; }
.namebox { width: 142px; background: #fff; text-align: center; color: #111; font-size: 12px; }
.drop { width: 19px; background: #fff; padding-right: 2px; }
.fxwrap { width: 84px; display: flex; align-items: center; justify-content: space-between; background: #dfe2e7; border-left: 1px solid #a3a8b0; border-right: 1px solid #a3a8b0; border-radius: 11px 0 0 11px; padding: 0 6px 0 4px; }
.knob { width: 9px; height: 9px; border-radius: 5px; background: linear-gradient(#b4b8be, #f3f4f6); }
.fx { font-family: "Liberation Serif", serif; font-size: 15px; font-weight: 700; line-height: 16px; color: #333; }
.fx small { font-size: 11px; }
.finput { flex: 1; background: #fff; padding: 0 4px; color: #111; }
.expand { width: 16px; border: 1px solid #a3a8b0; background: #dfe2e7; }

.work { flex: 1; min-height: 0; display: flex; }
.sheet { flex: 1; min-width: 0; overflow: hidden; background: #fff; }
table { width: 100%; table-layout: fixed; border-collapse: separate; border-spacing: 0; }
.c-row { width: 26px; } .c-a { width: 67px; } .c-b { width: 38px; } .c-c { width: 315px; } .c-d { width: 111px; } .c-n { width: 62px; }
th { padding: 0; font-weight: 400; font-size: 12px; line-height: 18px; text-align: center; color: #333; background: #dfe2e6; border-right: 1px solid #a9aeb6; border-bottom: 1px solid #a9aeb6; }
th.last { padding-left: 4px; border-right: 0; }
thead th { height: 20px; }
.corner svg { margin: 4px 2px 0 auto; }
th.sel { background: linear-gradient(#fbd05c, #ffe56a); border-color: #c08a22; }
td { padding: 0 2px; font-family: Lato, sans-serif; font-size: 14px; font-variant-ligatures: none; line-height: 18px; vertical-align: bottom; white-space: nowrap; color: #000; border-right: 1px solid #dadcdd; border-bottom: 1px solid #dadcdd; }
td:last-child { border-right: 0; }
.h21 > * { height: 21px; } .h22 > * { height: 22px; } .h20 > * { height: 20px; }
td.green { background: #a9d08e; border-color: #000; }
td.yellow { background: #ff0; text-align: right; padding-right: 6px; font-size: 13px; }
td.head { background: #d6dce4; text-align: center; border-bottom-color: #d6dce4; }
td.caps { font-size: 13px; }
td.bb { border-bottom: 1px solid #000; }
td.br { border-right: 1px solid #000; }
td.b2 { border-bottom: 2px solid #000; }
td.r2 { border-right: 2px solid #000; }
td.bd { border-bottom: 3px double #000; line-height: 17px; }
td.calc { color: #00b050; text-align: right; font-size: 12px; }
td.comma { padding-right: 6px; }
td.active { position: relative; }
.cursor { position: absolute; inset: -2px -2px -2px 0; border: 2px solid #111; border-left-width: 1px; }
.cursor::after { content: ""; position: absolute; right: -3px; bottom: -3px; width: 6px; height: 6px; background: #111; border: 1px solid #fff; border-right: 0; border-bottom: 0; }

.vbar { width: 20px; flex: none; display: flex; flex-direction: column; align-items: center; background: #dbe0e9; padding-right: 4px; border-left: 1px solid #c3c8d0; }
.vsplit { width: 15px; height: 8px; flex: none; border: 1px solid #7c828b; background: linear-gradient(#fff 2px, #777 2px, #777 3px, #fff 3px); }
.vup, .vdown { width: 9px; height: 5px; flex: none; margin: 5px 0 0; background: #444; clip-path: polygon(50% 0, 100% 100%, 0 100%); }
.vdown { margin: 0 0 6px; clip-path: polygon(0 0, 100% 0, 50% 100%); }
.vtrack { flex: 1; width: 15px; display: flex; flex-direction: column; }
.vtrack::before { content: ""; flex: 276; } .vtrack::after { content: ""; flex: 49; }
.vthumb { flex: 173; border: 1px solid #8d939c; border-radius: 2px; background: linear-gradient(90deg, #f5f7fa, #d4d9e1); display: flex; align-items: center; justify-content: center; }
.vthumb span { width: 8px; height: 7px; background: repeating-linear-gradient(#777 0 1px, transparent 1px 2px); }

.sheetbar { flex: none; height: 17px; display: flex; align-items: stretch; border-top: 1px solid #9ea4ad; border-bottom: 1px solid #8e939b; background: #dbe0e9; }
.nav { width: 64px; display: flex; align-items: center; justify-content: space-between; padding: 0 7px 0 5px; }
.stab { width: 62px; font-size: 12px; height: 14px; }
.other { color: #fff; background: linear-gradient(#8c8c8c, #747474); border: 1px solid #d8d8d8; clip-path: polygon(0 0, 100% 0, 100% 60%, 94% 100%, 0 100%); }
.cur { font-weight: 700; font-size: 13px; color: #000; background: linear-gradient(#fff, #eceff4); }
.newtab { width: 44px; }
.hsplit { width: 8px; border: 1px solid #7c828b; background: #fff; box-shadow: inset 0 0 0 2px #e5e8ee; }
.hsplit.end { margin-right: 20px; }
.hl { width: 5px; height: 8px; margin: 3px 7px 0 5px; background: #444; clip-path: polygon(100% 0, 100% 100%, 0 50%); }
.hr { width: 5px; height: 8px; margin: 3px 6px 0 0; background: #444; clip-path: polygon(0 0, 100% 50%, 0 100%); }
.htrack { flex: 0 0 494px; display: flex; }
.hthumb { width: 455px; border: 1px solid #8d939c; border-radius: 2px; background: linear-gradient(#f3f5f9, #dbdfe7); display: flex; align-items: center; justify-content: center; }
.hthumb span { width: 8px; height: 7px; background: repeating-linear-gradient(90deg, #777 0 1px, transparent 1px 2px); }

.status { flex: none; height: 21px; display: flex; align-items: center; background: linear-gradient(#e4e7ea, #d3d6da 40%, #b9bec4); padding: 0 4px 1px 0; }
.ready { padding-left: 8px; width: 49px; line-height: 18px; border-right: 1px solid #8e9399; }
.view { width: 19px; height: 18px; }
.view.on { border: 1px solid #c29a3b; border-radius: 2px; background: #ffdf7b; }
.pct2 { width: 42px; text-align: center; margin-left: 2px; }
.round { width: 16px; height: 16px; }
.zoom { appearance: none; width: 100px; height: 14px; background: linear-gradient(#777, #777) center / 100% 1px no-repeat; }
.zoom::-webkit-slider-thumb { appearance: none; width: 9px; height: 12px; background: #f4f5f6; border: 1px solid #666; border-radius: 1px 1px 5px 5px; }

.taskbar { flex: none; height: 40px; display: flex; gap: 4px; padding: 1px 0; background: linear-gradient(90deg, #264a9a, #2a56a6); }
.start { width: 48px; }
.task { width: 58px; height: 38px; border: 1px solid transparent; }
.task.open { background: #4f70b0; border-color: #8fa5d0; }
.task.current { background: linear-gradient(#8b9ecb, #7089bf); border-color: #e2e8f4; }
.tray { display: flex; align-items: center; gap: 8px; }
.clock { width: 82px; color: #fff; text-align: center; line-height: 16px; padding: 4px 4px 0 0; margin-left: -4px; }
.clock div { white-space: nowrap; }
</style>
